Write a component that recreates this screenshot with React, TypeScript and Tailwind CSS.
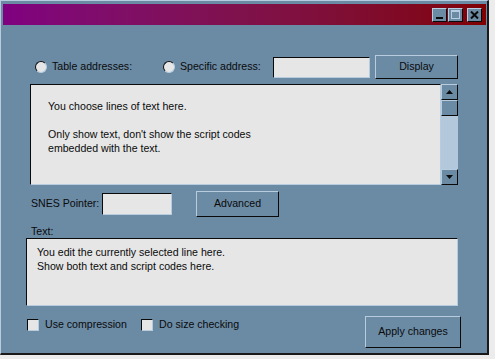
import React from "react";

const raised =
  "border border-t-[#b8cce0] border-l-[#b8cce0] border-r-[#0a0a0a] border-b-[#0a0a0a]";
const sunken =
  "border border-t-[#0a0a0a] border-l-[#0a0a0a] border-r-[#b8cce0] border-b-[#b8cce0]";

function Radio({ label }: { label: string }) {
  return (
    <div className="flex items-center">
      <span className="w-[12px] h-[12px] rounded-full bg-[#e6e6e6] border border-t-[#101010] border-l-[#101010] border-r-[#b8cce0] border-b-[#b8cce0]" />
      <span className="ml-[5px]">{label}</span>
    </div>
  );
}

function Check({ label }: { label: string }) {
  return (
    <div className="flex items-center">
      <span className={`w-[12px] h-[12px] bg-[#e6e6e6] ${sunken}`} />
      <span className="ml-[6px]">{label}</span>
    </div>
  );
}

function Btn({ label, w, h }: { label: string; w: string; h: string }) {
  return (
    <div className={`${w} ${h} ${raised} flex items-center justify-center text-[#0a0a0a]`}>
      {label}
    </div>
  );
}

export default function App() {
  return (
    <div
      className="w-[495px] h-[359px] bg-[#ececec] text-[10.6px] text-[#0a0a0a]"
      style={{ fontFamily: '"Liberation Sans", Arial, sans-serif' }}
    >
      <div className="w-[489px] h-[355px] bg-[#6b8ba5] border-t border-l border-t-[#b8cce0] border-l-[#b8cce0] border-r-2 border-b-2 border-r-[#1a1a1a] border-b-[#1a1a1a] pt-[3px] pl-[2px] pr-[1px] flex flex-col">
        {/* Title bar */}
        <div className="h-[21px] w-[483px] bg-gradient-to-r from-[#800080] to-[#800000] flex items-center justify-end pr-[4px]">
          <div className={`w-[15px] h-[14px] bg-[#6b8ba5] ${raised} flex items-end justify-center pb-[2px]`}>
            <span className="w-[7px] h-[2px] bg-[#0a0a0a]" />
          </div>
          <div className={`ml-[1px] w-[15px] h-[14px] bg-[#6b8ba5] ${raised} flex items-center justify-center`}>
            <span className="w-[9px] h-[9px] border border-[#b8cce0] border-t-2" />
          </div>
          <div className={`ml-[4px] w-[15px] h-[14px] bg-[#6b8ba5] ${raised} flex items-center justify-center`}>
            <svg width="9" height="8" viewBox="0 0 9 8">
              <path d="M1 0.5 L8 7.5 M8 0.5 L1 7.5" stroke="#0a0a0a" strokeWidth="2" />
            </svg>
          </div>
        </div>

        {/* Row 1 */}
        <div className="mt-[30px] h-[24px] flex items-center">
          <div className="ml-[32px] w-[128px]">
            <Radio label="Table addresses:" />
          </div>
          <div className="w-[110px]">
            <Radio label="Specific address:" />
          </div>
          <div className={`w-[97px] h-[21px] bg-[#e6e6e6] ${sunken}`} />
          <div className="ml-[5px]">
            <Btn label="Display" w="w-[83px]" h="h-[24px]" />
          </div>
        </div>

        {/* List box */}
        <div className="mt-[5px] ml-[27px] w-[428px] h-[101px] flex">
          <div className={`flex-1 bg-[#e6e6e6] ${sunken} pl-[17px] pt-[14px] leading-[14px]`}>
            <div>You choose lines of text here.</div>
            <div className="mt-[14px]">Only show text, don't show the script codes</div>
            <div>embedded with the text.</div>
          </div>
          <div className="w-[17px] h-full bg-[#b4c8dc] flex flex-col">
            <div className={`h-[16px] bg-[#6b8ba5] ${raised} flex items-center justify-center`}>
              <svg width="7" height="4" viewBox="0 0 7 4">
                <path d="M3.5 0 L7 4 L0 4 Z" fill="#0a0a0a" />
              </svg>
            </div>
            <div className={`h-[16px] bg-[#6b8ba5] ${raised}`} />
            <div className="flex-1" />
            <div className={`h-[16px] bg-[#6b8ba5] ${raised} flex items-center justify-center`}>
              <svg width="7" height="4" viewBox="0 0 7 4">
                <path d="M0 0 L7 0 L3.5 4 Z" fill="#0a0a0a" />
              </svg>
            </div>
          </div>
        </div>

        {/* SNES row */}
        <div className="mt-[6px] h-[26px] flex items-center">
          <span className="ml-[28px] w-[71px]">SNES Pointer:</span>
          <div className={`w-[70px] h-[22px] bg-[#e6e6e6] ${sunken}`} />
          <div className="ml-[24px]">
            <Btn label="Advanced" w="w-[83px]" h="h-[26px]" />
          </div>
        </div>

        {/* Text label */}
        <div className="mt-[7px] ml-[28px] leading-[14px]">Text:</div>

        {/* Text area */}
        <div className={`ml-[23px] w-[432px] h-[68px] bg-[#e6e6e6] ${sunken} pl-[10px] pt-[6px] leading-[14px]`}>
          <div>You edit the currently selected line here.</div>
          <div>Show both text and script codes here.</div>
        </div>

        {/* Bottom row */}
        <div className="mt-[10px] flex items-start">
          <div className="ml-[24px] mt-[1px] flex items-center">
            <div className="w-[114px]">
              <Check label="Use compression" />
            </div>
            <Check label="Do size checking" />
          </div>
          <div className="ml-auto mr-[25px]">
            <Btn label="Apply changes" w="w-[96px]" h="h-[32px]" />
          </div>
        </div>
      </div>
    </div>
  );
}
